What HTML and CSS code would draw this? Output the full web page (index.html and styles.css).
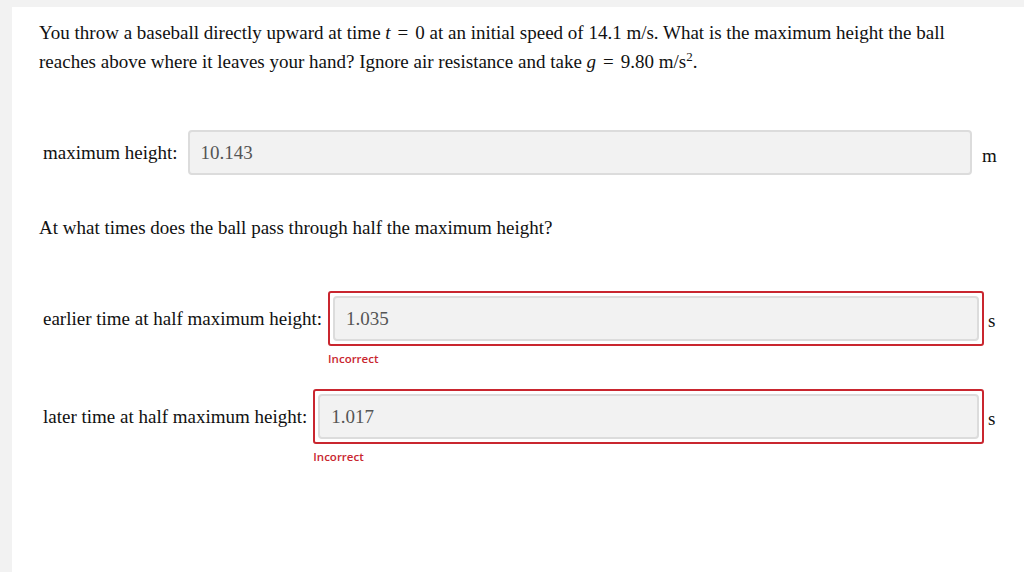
FILE: index.html
```html
<!DOCTYPE html>
<html lang="en">
  <head>
    <meta charset="UTF-8" />
    <meta name="viewport" content="width=device-width, initial-scale=1.0" />
    <title>Vertical throw</title>
    <link rel="stylesheet" href="styles.css">
  </head>
  <body>
    <div class="panel">
      <p class="question">
        You throw a baseball directly upward at time <i>t</i><span class="op">=</span>0 at an initial speed of 14.1 m/s. What is the maximum height the ball
        reaches above where it leaves your hand? Ignore air resistance and take <i>g</i><span class="op">=</span>9.80 m/s<sup>2</sup>.
      </p>

      <div class="answer-row first">
        <label for="max-height">maximum height:</label>
        <div class="field">
          <input type="text" id="max-height" value="10.143" readonly />
        </div>
        <span class="unit wide">m</span>
      </div>

      <p class="question second">At what times does the ball pass through half the maximum height?</p>

      <div class="answer-row">
        <label for="t-early">earlier time at half maximum height:</label>
        <div class="field">
          <div class="wrong">
            <input type="text" id="t-early" value="1.035" readonly />
          </div>
          <div class="feedback">Incorrect</div>
        </div>
        <span class="unit">s</span>
      </div>

      <div class="answer-row later">
        <label for="t-late">later time at half maximum height:</label>
        <div class="field">
          <div class="wrong">
            <input type="text" id="t-late" value="1.017" readonly />
          </div>
          <div class="feedback">Incorrect</div>
        </div>
        <span class="unit">s</span>
      </div>
    </div>
  </body>
</html>
```

FILE: styles.css
```css
body {
  margin: 0;
  background-color: #f2f2f2;
  font-family: "Liberation Serif", "Times New Roman", serif;
  color: #111;
}
.panel {
  margin: 7px 0 0 12px;
  min-height: calc(100vh - 7px);
  box-sizing: border-box;
  background-color: #fff;
  padding: 11px 0 0 27px;
}
.question {
  margin: 0;
  font-size: 19px;
  line-height: 29px;
  padding-right: 40px;
}
.question.second {
  margin-top: 38px;
}
.question i {
  font-style: italic;
}
.op {
  margin: 0 7px;
}
sup {
  font-size: 13px;
  line-height: 0;
  vertical-align: 7px;
}
.answer-row {
  display: flex;
  align-items: flex-start;
  margin-top: 49px;
  padding-left: 4px;
  font-size: 19px;
}
.answer-row.first {
  margin-top: 54px;
}
.answer-row.later {
  margin-top: 22px;
}
.answer-row label {
  line-height: 55px;
  white-space: nowrap;
  margin-right: 6px;
}
.answer-row.first label {
  line-height: 45px;
  margin-right: 10px;
}
.field {
  flex: 1;
  display: flex;
  flex-direction: column;
}
.field input {
  width: 100%;
  height: 45px;
  box-sizing: border-box;
  border: 2px solid #dcdcdc;
  border-radius: 4px;
  background-color: #f2f2f2;
  padding: 0 11px;
  font-family: "Liberation Serif", "Times New Roman", serif;
  font-size: 19px;
  color: #555;
  outline: none;
}
.wrong {
  border: 2px solid #c9262f;
  border-radius: 3px;
  padding: 3px;
}
.feedback {
  margin-top: 5px;
  font-family: "Open Sans", "Liberation Sans", sans-serif;
  font-weight: 600;
  font-size: 11.5px;
  line-height: 16px;
  color: #c9262f;
}
.unit {
  width: 36px;
  margin-left: 4px;
  line-height: 59px;
}
.unit.wide {
  width: 42px;
  margin-left: 10px;
  line-height: 45px;
  padding-top: 3px;
  margin-bottom: -3px;
}
```
